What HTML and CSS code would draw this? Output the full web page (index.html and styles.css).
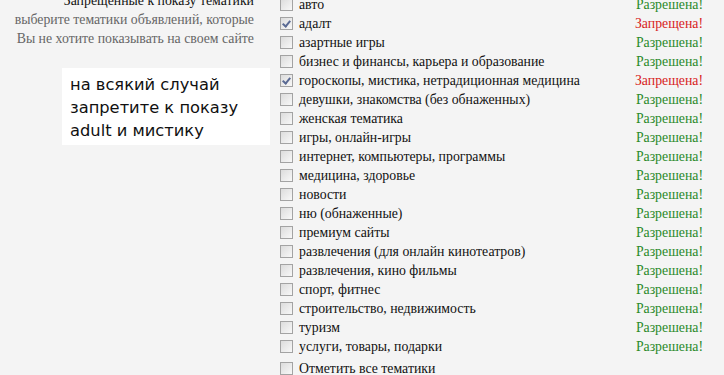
FILE: index.html
```html
<!DOCTYPE html>
<html lang="ru">

<head>
    <meta charset="UTF-8">
    <title>Тематики объявлений</title>
    <link rel="stylesheet" href="styles.css">
</head>

<body>
    <div class="page">
        <div class="side">
            <div class="title">Запрещенные к показу тематики</div>
            <div class="hint">выберите тематики объявлений, которые<br>Вы не хотите показывать на своем сайте</div>
            <div class="note">на всякий случай<br>запретите к показу<br>adult и мистику</div>
        </div>

        <div class="list">
            <div class="row"><span class="box"></span><span class="name">авто</span><span class="st ok">Разрешена!</span></div>
            <div class="row"><span class="box on"></span><span class="name">адалт</span><span class="st no">Запрещена!</span></div>
            <div class="row"><span class="box"></span><span class="name">азартные игры</span><span class="st ok">Разрешена!</span></div>
            <div class="row"><span class="box"></span><span class="name">бизнес и финансы, карьера и образование</span><span class="st ok">Разрешена!</span></div>
            <div class="row"><span class="box on"></span><span class="name">гороскопы, мистика, нетрадиционная медицина</span><span class="st no">Запрещена!</span></div>
            <div class="row"><span class="box"></span><span class="name">девушки, знакомства (без обнаженных)</span><span class="st ok">Разрешена!</span></div>
            <div class="row"><span class="box"></span><span class="name">женская тематика</span><span class="st ok">Разрешена!</span></div>
            <div class="row"><span class="box"></span><span class="name">игры, онлайн-игры</span><span class="st ok">Разрешена!</span></div>
            <div class="row"><span class="box"></span><span class="name">интернет, компьютеры, программы</span><span class="st ok">Разрешена!</span></div>
            <div class="row"><span class="box"></span><span class="name">медицина, здоровье</span><span class="st ok">Разрешена!</span></div>
            <div class="row"><span class="box"></span><span class="name">новости</span><span class="st ok">Разрешена!</span></div>
            <div class="row"><span class="box"></span><span class="name">ню (обнаженные)</span><span class="st ok">Разрешена!</span></div>
            <div class="row"><span class="box"></span><span class="name">премиум сайты</span><span class="st ok">Разрешена!</span></div>
            <div class="row"><span class="box"></span><span class="name">развлечения (для онлайн кинотеатров)</span><span class="st ok">Разрешена!</span></div>
            <div class="row"><span class="box"></span><span class="name">развлечения, кино фильмы</span><span class="st ok">Разрешена!</span></div>
            <div class="row"><span class="box"></span><span class="name">спорт, фитнес</span><span class="st ok">Разрешена!</span></div>
            <div class="row"><span class="box"></span><span class="name">строительство, недвижимость</span><span class="st ok">Разрешена!</span></div>
            <div class="row"><span class="box"></span><span class="name">туризм</span><span class="st ok">Разрешена!</span></div>
            <div class="row"><span class="box"></span><span class="name">услуги, товары, подарки</span><span class="st ok">Разрешена!</span></div>
            <div class="row all"><span class="box"></span><span class="name">Отметить все тематики</span><span class="st"></span></div>
        </div>
    </div>
</body>

</html>
```

FILE: styles.css
```css
html,
body {
    margin: 0;
    padding: 0;
    background-color: #f4f4f4;
    color: #111;
    font-family: "Liberation Serif", "Times New Roman", serif;
    font-size: 13.8px;
}

.page {
    display: flex;
    align-items: flex-start;
}

.side {
    width: 254px;
    flex-shrink: 0;
    margin-top: -9px;
    text-align: right;
    line-height: 19px;
}

.side .title {
    color: #111;
}

.side .hint {
    color: #666;
}

.note {
    width: 192px;
    margin: 20px 0 0 62px;
    padding: 5px 8px 3px;
    background-color: #fff;
    text-align: left;
    color: #111;
    font-family: "DejaVu Sans", Verdana, sans-serif;
    font-size: 16.3px;
    line-height: 23px;
}

.list {
    width: 423px;
    margin: -5px 0 0 26px;
}

.row {
    display: grid;
    grid-template-columns: 13px 1fr auto;
    column-gap: 6px;
    align-items: center;
    height: 19px;
}

.row.all {
    margin-top: 3px;
}

.box {
    width: 11px;
    height: 11px;
    border: 1px solid #a3a3a3;
    background: linear-gradient(135deg, #dcdcdc, #f8f8f8);
    position: relative;
}

.box.on::after {
    content: "";
    position: absolute;
    left: 3px;
    top: 1px;
    width: 3px;
    height: 6px;
    border: solid #5a6a94;
    border-width: 0 2px 2px 0;
    transform: rotate(40deg);
}

.st {
    text-align: right;
}

.st.ok {
    color: #2a8a2a;
}

.st.no {
    color: #d81e1e;
}
```
